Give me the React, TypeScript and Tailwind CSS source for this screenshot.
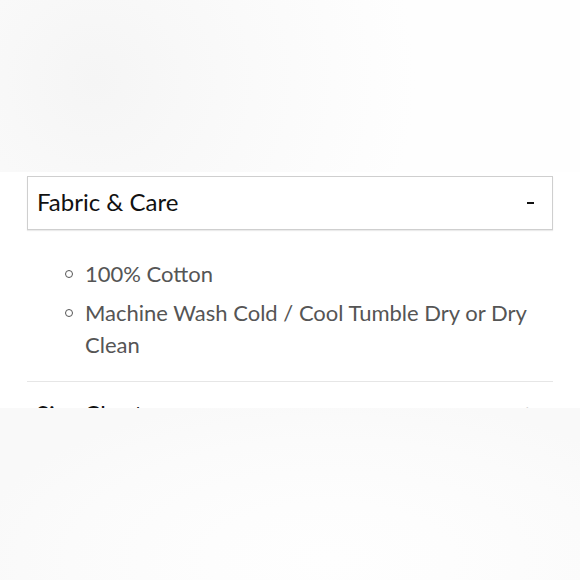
export default function App() {
  const items = ["100% Cotton", "Machine Wash Cold / Cool Tumble Dry or Dry Clean"];

  return (
    <div className="w-[580px] h-[580px] overflow-hidden bg-white font-['Lato',sans-serif]">
      {/* faded top */}
      <div className="h-[172px] bg-[radial-gradient(circle_at_95px_80px,#f5f5f5_0px,#f8f8f8_90px,#fafafa_160px,#fcfcfc_240px,#fefefe_320px)]" />

      {/* accordion */}
      <div className="h-[236px] overflow-hidden px-[27px] pt-[4px]">
        <div className="flex items-center justify-between h-[54px] border border-[#cfcfcf] shadow-[0_1px_1px_rgba(0,0,0,0.08)] pl-[9px] pr-[18px] pb-[3px]">
          <span className="text-[24px] text-[#111]">Fabric &amp; Care</span>
          <span className="block w-[7px] h-[2px] bg-[#111] mt-[3px]" />
        </div>

        <ul className="mt-[28px] pl-[38px] pr-[10px] text-[22px] leading-[32px] text-[#555] space-y-[7px]">
          {items.map((t) => (
            <li key={t} className="relative pl-[20px]">
              <span className="absolute left-0 top-[12px] w-[8px] h-[8px] rounded-full border-[1.5px] border-[#555]" />
              {t}
            </li>
          ))}
        </ul>

        <div className="mt-[20px] border-t border-[#e6e6e6] flex justify-between pl-[9px] pr-[20px] pt-[14px]">
          <span className="text-[24px] text-[#111]">Size Chart</span>
          <span className="text-[20px] text-[#ccc]">+</span>
        </div>
      </div>

      {/* faded bottom */}
      <div className="h-[172px] bg-[radial-gradient(ellipse_at_330px_150px,#fefefe_0px,#fdfdfd_120px,#fbfbfb_260px,#f9f9f9_360px)]" />
    </div>
  );
}
